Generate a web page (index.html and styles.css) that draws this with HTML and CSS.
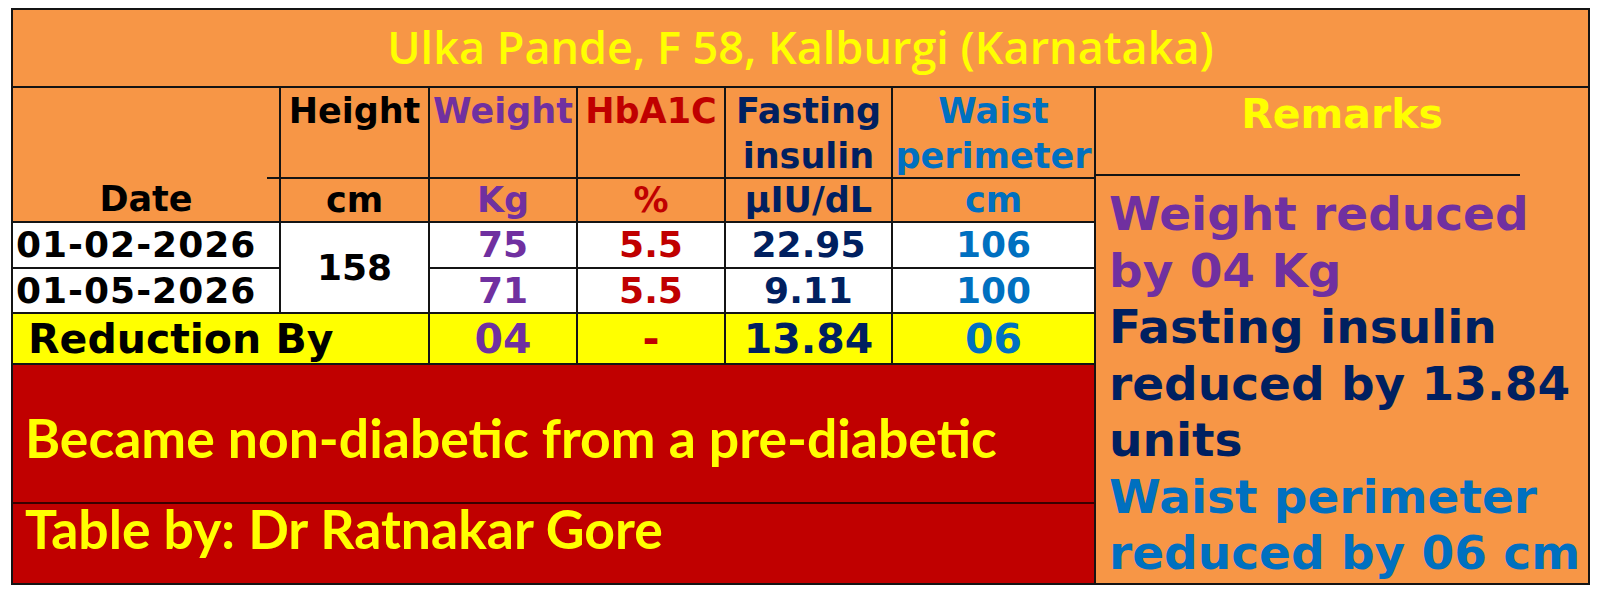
FILE: index.html
```
<!DOCTYPE html>
<html lang="en">
<head>
<meta charset="utf-8">
<title>Ulka Pande - Table</title>
<link rel="stylesheet" href="styles.css">
</head>
<body>
<div class="sheet">
  <div class="c title">Ulka Pande, F 58, Kalburgi (Karnataka)</div>

  <div class="c h date-h">Date</div>
  <div class="c h black">Height</div>
  <div class="c h purple">Weight</div>
  <div class="c h red">HbA1C</div>
  <div class="c h navy">Fasting<br>insulin</div>
  <div class="c h blue">Waist<br>perimeter</div>
  <div class="c remarks-h">Remarks</div>

  <div class="c s black">cm</div>
  <div class="c s purple">Kg</div>
  <div class="c s red">%</div>
  <div class="c s navy">µIU/dL</div>
  <div class="c s blue">cm</div>

  <div class="c remarks">
    <p class="rm purple">Weight reduced<br>by 04 Kg</p>
    <p class="rm navy">Fasting insulin<br>reduced by 13.84<br>units</p>
    <p class="rm blue">Waist perimeter<br>reduced by 06 cm</p>
  </div>

  <div class="c d dt row1 black">01-02-2026</div>
  <div class="c d ht black">158</div>
  <div class="c d row1 col3 purple">75</div>
  <div class="c d row1 col4 red">5.5</div>
  <div class="c d row1 col5 navy">22.95</div>
  <div class="c d row1 col6 blue">106</div>

  <div class="c d dt row2 black">01-05-2026</div>
  <div class="c d row2 col3 purple">71</div>
  <div class="c d row2 col4 red">5.5</div>
  <div class="c d row2 col5 navy">9.11</div>
  <div class="c d row2 col6 blue">100</div>

  <div class="c y lbl black">Reduction By</div>
  <div class="c y col3 purple">04</div>
  <div class="c y col4 red">-</div>
  <div class="c y col5 navy">13.84</div>
  <div class="c y col6 blue">06</div>

  <div class="c r r1">Became non-diabetic from a pre-diabetic</div>
  <div class="c r r2">Table by: Dr Ratnakar Gore</div>
</div>
</body>
</html>
```
FILE: styles.css
```
html, body {
  margin: 0;
  padding: 0;
  background: #ffffff;
}

.sheet {
  margin: 8px 0 0 11px;
  display: grid;
  grid-template-columns: 268px 149px 148px 148px 167px 203px 494px;
  grid-template-rows: 78px 91px 44px 46px 45px 51px 139px 81px;
  width: max-content;
  border-left: 2px solid #141414;
  border-top: 2px solid #141414;
  font-family: "DejaVu Sans", Verdana, sans-serif;
  font-weight: bold;
}

.c {
  box-sizing: border-box;
  border-right: 2px solid #141414;
  border-bottom: 2px solid #141414;
  display: flex;
  align-items: center;
  justify-content: center;
  text-align: center;
  white-space: nowrap;
}

.black { color: #000000; }
.purple { color: #7030A0; }
.red { color: #C00000; }
.navy { color: #002060; }
.blue { color: #0070C0; }

.title {
  grid-column: 1 / -1;
  grid-row: 1;
  background: #F79646;
  color: #FFFF00;
  font-family: "Open Sans", Lato, sans-serif;
  font-weight: 600;
  font-size: 45px;
  line-height: 50px;
  padding-bottom: 2px;
}

.h {
  grid-row: 2;
  background: #F79646;
  align-items: flex-start;
  padding-top: 1px;
  font-size: 35px;
  line-height: 45px;
}

.date-h {
  grid-column: 1;
  grid-row: 2 / 4;
  align-items: flex-end;
  line-height: 44px;
  background: #F79646 linear-gradient(#141414, #141414) no-repeat right 0 top 89px / 12px 2px;
}

.remarks-h {
  grid-column: 7;
  grid-row: 2;
  border-bottom: none;
  background: #F79646 linear-gradient(#141414, #141414) no-repeat 0 calc(100% - 3px) / 424px 2px;
  color: #FFFF00;
  align-items: flex-start;
  padding-top: 4px;
  font-size: 41px;
  line-height: 45px;
}

.s {
  grid-row: 3;
  background: #F79646;
  font-size: 35px;
  line-height: 42px;
}

.remarks {
  grid-column: 7;
  grid-row: 3 / 9;
  background: #F79646;
  display: block;
  text-align: left;
  padding: 7px 0 0 13px;
  font-size: 47px;
  line-height: 56.5px;
}

.rm {
  margin: 0;
}

.row1 { grid-row: 4; }
.row2 { grid-row: 5; }
.col3 { grid-column: 3; }
.col4 { grid-column: 4; }
.col5 { grid-column: 5; }
.col6 { grid-column: 6; }

.d {
  background: #ffffff;
  font-size: 36px;
  line-height: 42px;
}

.dt {
  grid-column: 1;
  justify-content: flex-start;
  padding-left: 3px;
  letter-spacing: 1px;
}

.ht {
  grid-column: 2;
  grid-row: 4 / 6;
}

.y {
  grid-row: 6;
  background: #FFFF00;
  font-size: 41px;
  line-height: 46px;
}

.lbl {
  grid-column: 1 / 3;
  justify-content: flex-start;
  padding-left: 15px;
}

.r {
  grid-column: 1 / 7;
  background: #C00000;
  color: #FFFF00;
  font-family: Lato, "Open Sans", sans-serif;
  font-weight: 700;
  justify-content: flex-start;
  padding-left: 12px;
  font-size: 53.5px;
}

.r1 {
  grid-row: 7;
  line-height: 53px;
  padding-top: 8px;
  border-bottom-color: #3a0000;
}

.r2 {
  grid-row: 8;
  align-items: flex-start;
  line-height: 48px;
  padding-top: 0;
}
```
